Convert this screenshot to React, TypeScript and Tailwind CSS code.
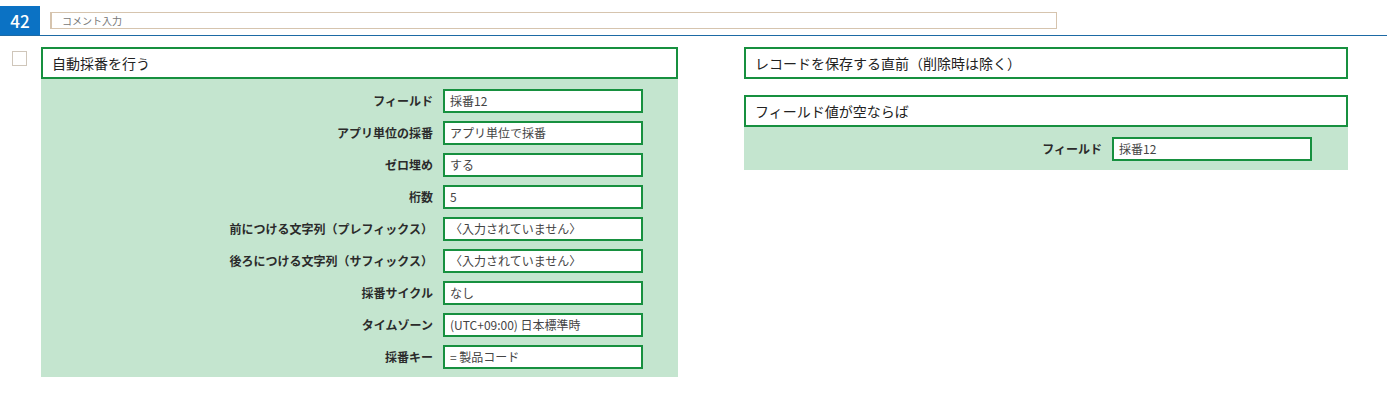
const font = { fontFamily: '"Noto Sans CJK JP", "Noto Sans", sans-serif' }

const rows: [string, string][] = [
  ['フィールド', '採番12'],
  ['アプリ単位の採番', 'アプリ単位で採番'],
  ['ゼロ埋め', 'する'],
  ['桁数', '5'],
  ['前につける文字列（プレフィックス）', '〈入力されていません〉'],
  ['後ろにつける文字列（サフィックス）', '〈入力されていません〉'],
  ['採番サイクル', 'なし'],
  ['タイムゾーン', '(UTC+09:00) 日本標準時'],
  ['採番キー', '= 製品コード'],
]

function Field({ label, value }: { label: string; value: string }) {
  return (
    <div className="flex items-center justify-end h-6">
      <span className="mr-[10px] text-[12px] font-bold text-[#2b2b2b] whitespace-nowrap">{label}</span>
      <div className="w-[200px] h-6 border-2 border-[#17903f] bg-white flex items-center pl-[5px] text-[12px] text-[#444] whitespace-nowrap">
        {value}
      </div>
    </div>
  )
}

function Header({ children }: { children: React.ReactNode }) {
  return (
    <div className="h-8 border-2 border-[#17903f] bg-white flex items-center pl-[9px] text-[14px] text-[#222]">
      {children}
    </div>
  )
}

export default function App() {
  return (
    <div className="w-[1387px] h-[404px] bg-white overflow-hidden" style={font}>
      <div className="pt-[6px] flex items-start border-b border-[#1d6aa5]">
        <div className="w-[40px] h-[29px] bg-[#0b72c4] text-white text-[17px] font-medium flex items-center justify-center">
          42
        </div>
        <div className="ml-[10px] mt-[6px] w-[1007px] h-[17px] border border-[#d6c4ae] border-l-2 flex items-center pl-[10px] text-[10px] text-[#777]">
          コメント入力
        </div>
      </div>

      <div className="flex items-start pt-[11px]">
        <div className="ml-[12px] mt-[4px] w-[15px] h-[15px] border border-[#cfc6ba] bg-white" />
        <div className="ml-[14px] w-[637px]">
          <Header>自動採番を行う</Header>
          <div className="bg-[#c4e5cf] pt-[10px] pb-[8px] pr-[35px] flex flex-col gap-2">
            {rows.map(([l, v]) => (
              <Field key={l} label={l} value={v} />
            ))}
          </div>
        </div>

        <div className="ml-[66px] w-[604px] flex flex-col gap-4">
          <Header>レコードを保存する直前（削除時は除く）</Header>
          <div>
            <Header>フィールド値が空ならば</Header>
            <div className="bg-[#c4e5cf] pt-[10px] pb-[9px] pr-[36px]">
              <Field label="フィールド" value="採番12" />
            </div>
          </div>
        </div>
      </div>
    </div>
  )
}
